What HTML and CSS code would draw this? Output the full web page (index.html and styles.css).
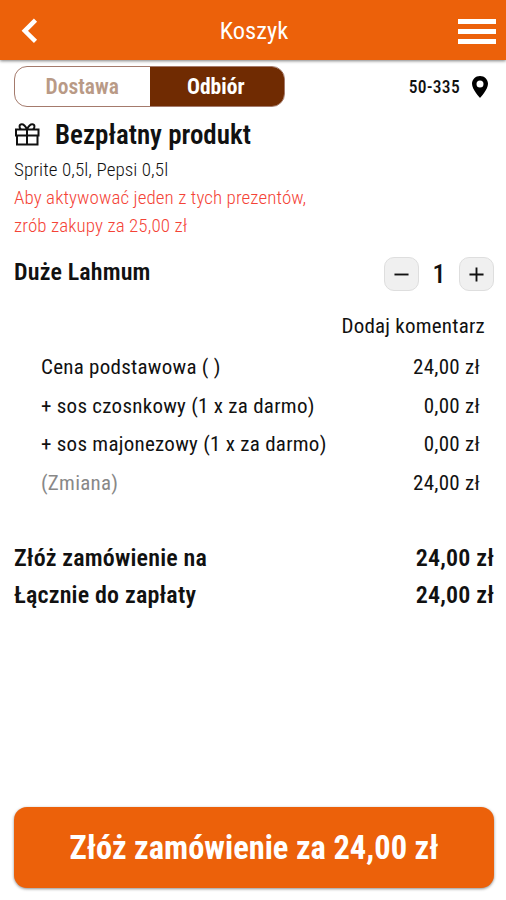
FILE: index.html
```html
<!DOCTYPE html>
<html lang="pl">
<head>
<meta charset="utf-8">
<meta name="viewport" content="width=device-width, initial-scale=1">
<title>Koszyk</title>
<link rel="stylesheet" href="styles.css">
</head>
<body>
<header class="topbar">
  <svg class="back" viewBox="0 0 18 26"><path d="M14.500 2.200 3.800 12.800l10.700 10.600" fill="none" stroke="#fff" stroke-width="4.500"/></svg>
  <h1 class="topbar-title">Koszyk</h1>
  <div class="menu"><i></i><i></i><i></i></div>
</header>
<main class="cart">
  <div class="delivery">
    <div class="toggle"><span class="option">Dostawa</span><span class="option active">Odbiór</span></div>
    <div class="place"><span>50-335</span>
      <svg class="pin" viewBox="0 0 16 22"><path fill-rule="evenodd" d="M8 0C3.500 0 0 3.500 0 7.800 0 13.500 8 22 8 22s8-8.500 8-14.200C16 3.500 12.500 0 8 0Zm0 4.400a3.500 3.500 0 1 1 0 7 3.500 3.500 0 0 1 0-7Z"/></svg>
    </div>
  </div>
  <section class="gift">
    <h2 class="gift-title">
      <svg class="gift-icon" viewBox="0 0 26 24" fill="none" stroke="#111" stroke-width="2"><path d="M2 6.500h22.500v6H2zM3 12.500V21.500h20.500v-9M13 6.500v15M13 6.300C11.500 3 9.500 1.200 7.700 1.200c-2.500 0-3 3.600-.7 5.100M13 6.300c1.500-3.300 3.500-5.100 5.300-5.100 2.500 0 3 3.600.7 5.100"/></svg>
      <span>Bezpłatny produkt</span>
    </h2>
    <p class="gift-items">Sprite 0,5l, Pepsi 0,5l</p>
    <p class="gift-hint">Aby aktywować jeden z tych prezentów,<br>zrób zakupy za 25,00 zł</p>
  </section>
  <section class="item">
    <div class="item-head">
      <h3 class="item-name">Duże Lahmum</h3>
      <div class="stepper">
        <button class="step" aria-label="−"><svg viewBox="0 0 16 16"><path d="M.5 8h15"/></svg></button>
        <span class="qty">1</span>
        <button class="step" aria-label="+"><svg viewBox="0 0 16 16"><path d="M.5 8h15M8 .5v15"/></svg></button>
      </div>
    </div>
    <div class="comment">Dodaj komentarz</div>
    <div class="lines">
      <div class="line"><span>Cena podstawowa ( )</span><span>24,00 zł</span></div>
      <div class="line"><span>+ sos czosnkowy (1 x za darmo)</span><span>0,00 zł</span></div>
      <div class="line"><span>+ sos majonezowy (1 x za darmo)</span><span>0,00 zł</span></div>
      <div class="line"><span class="muted">(Zmiana)</span><span>24,00 zł</span></div>
    </div>
  </section>
  <section class="totals">
    <div class="total"><span>Złóż zamówienie na</span><span>24,00 zł</span></div>
    <div class="total"><span>Łącznie do zapłaty</span><span>24,00 zł</span></div>
  </section>
  <button class="order">Złóż zamówienie za 24,00 zł</button>
</main>
</body>
</html>
```

FILE: styles.css
```css
* { box-sizing: border-box; margin: 0; }
body {
  height: 900px;
  display: flex;
  flex-direction: column;
  overflow: hidden;
  background: #fff;
  color: #111;
  font-family: "Roboto Condensed", Roboto, sans-serif;
  font-stretch: 75%;
  white-space: nowrap;
}
button { border: 0; padding: 0; font-family: inherit; font-stretch: inherit; }
svg { display: block; }

.topbar {
  height: 60px;
  flex: none;
  display: grid;
  grid-template-columns: 60px 1fr 60px;
  align-items: center;
  background: #ec610a;
  box-shadow: 0 1px 3px rgba(0, 0, 0, .5);
}
.back { width: 18px; height: 26px; margin-left: 21px; margin-top: 2px; }
.topbar-title { padding-left: 2px; color: #fff; font-size: 24.500px; font-weight: 450; text-align: center; }
.menu { width: 38px; margin-left: 12px; margin-top: 2px; display: grid; gap: 5px; }
.menu i { height: 5px; background: #fff; }

.cart { flex: 1; display: flex; flex-direction: column; padding: 0 12px 12px 14px; }
.delivery { height: 41px; margin-top: 6px; display: flex; justify-content: space-between; }
.toggle {
  width: 271px;
  display: grid;
  grid-template-columns: 1fr 1fr;
  border: 1px solid #a47a6c;
  border-radius: 13px;
  overflow: hidden;
}
.option { display: grid; place-items: center; color: #b99a86; font-size: 21.500px; font-weight: 600; }
.option.active { padding-right: 2px; background: #702b02; color: #fff; font-weight: 700; }
.place { display: flex; align-items: center; gap: 12px; padding-right: 6px; font-size: 17.500px; font-weight: 500; letter-spacing: .35px; }
.pin { width: 16px; height: 22px; fill: #000; }

.gift-title { display: flex; align-items: center; gap: 15px; height: 34px; margin-top: 11px; font-size: 27px; font-weight: 600; }
.gift-icon { width: 26px; height: 24px; }
.gift-items, .gift-hint { font-size: 19px; font-weight: 350; line-height: 28px; letter-spacing: .08px; }
.gift-items { margin-top: 4px; }
.gift-hint { color: #f44336; }

.item-head { display: flex; align-items: center; justify-content: space-between; height: 34px; margin-top: 17px; }
.item-name { padding-bottom: 4px; font-size: 24px; font-weight: 600; letter-spacing: .15px; }
.stepper { display: flex; align-items: center; }
.step { width: 35px; height: 34px; display: grid; place-items: center; border: 1px solid #dedede; border-radius: 10px; background: #f0f0f0; }
.step svg { width: 15px; height: 15px; fill: none; stroke: #111; stroke-width: 2; }
.qty { width: 40px; text-align: center; font-size: 26px; font-weight: 500; }
.comment { height: 34px; margin-top: 18px; padding-right: 9px; line-height: 34px; text-align: right; font-size: 21px; font-weight: 370; letter-spacing: .22px; }
.lines { margin-top: 5px; padding: 0 14px 0 27px; }
.line { display: flex; justify-content: space-between; height: 38.700px; line-height: 38.700px; font-size: 21px; font-weight: 370; letter-spacing: .26px; }
.muted { color: #888; }

.totals { margin-top: 37px; }
.total { display: flex; justify-content: space-between; height: 37px; line-height: 37px; font-size: 24px; font-weight: 600; letter-spacing: .18px; }

.order {
  height: 81px;
  margin-top: auto;
  border-radius: 13px;
  background: #ec610a;
  box-shadow: 0 1px 3px rgba(0, 0, 0, .45);
  color: #fff;
  font-size: 32.500px;
  font-weight: 700;
}
```
